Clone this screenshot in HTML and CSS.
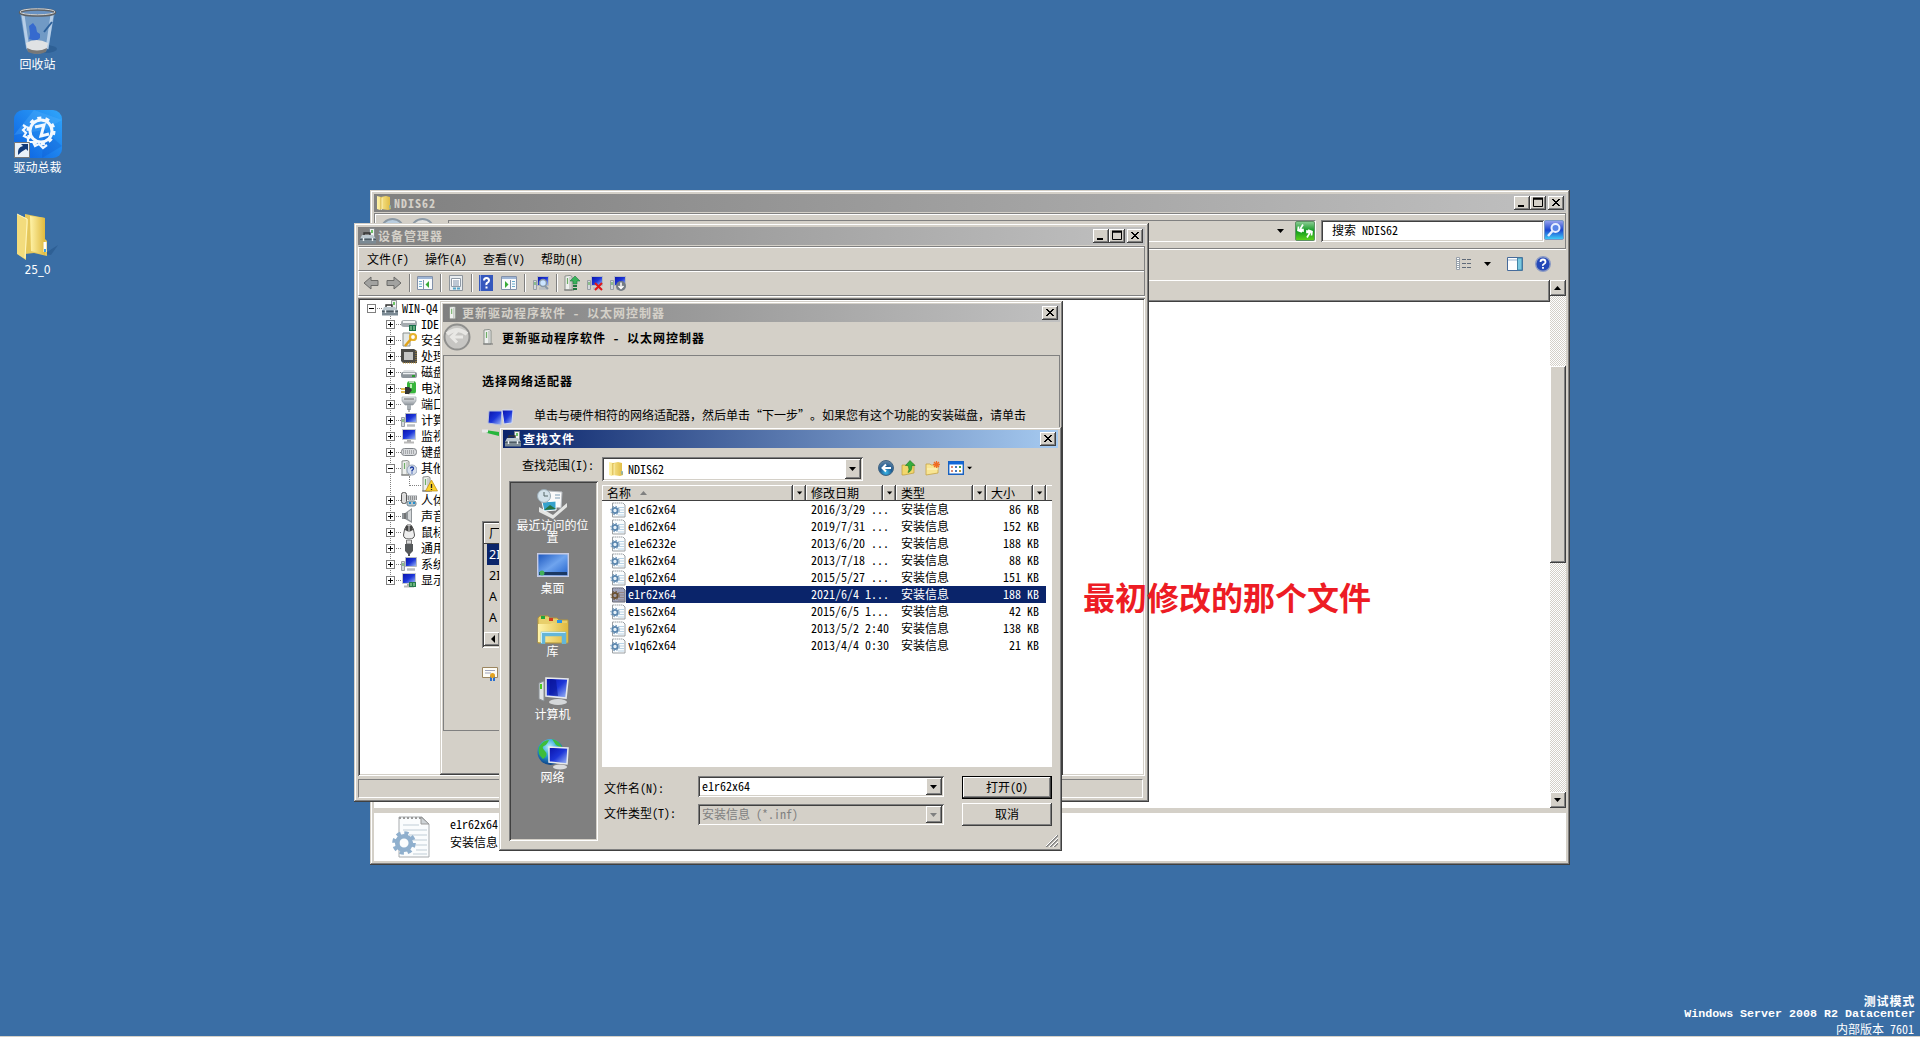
FILE: index.html
```html
<!DOCTYPE html>
<html lang="zh-CN">
<head>
<meta charset="utf-8">
<title>桌面</title>
<link rel="stylesheet" href="styles.css">
</head>
<body>
<svg class="defs" width="0" height="0" aria-hidden="true">
<defs>
<linearGradient id="gFold" x1="0" x2="1"><stop offset="0" stop-color="#fff3a8"/><stop offset="1" stop-color="#dfb93e"/></linearGradient>
<linearGradient id="gBlue" x1="0" y1="0" x2="1" y2="1"><stop offset="0" stop-color="#0a12a8"/><stop offset=".5" stop-color="#1c35d8"/><stop offset="1" stop-color="#a9c4f8"/></linearGradient>
<linearGradient id="gGrey" x1="0" x2="0" y1="0" y2="1"><stop offset="0" stop-color="#f4f6f8"/><stop offset="1" stop-color="#8d949b"/></linearGradient>
<linearGradient id="gDesk" x1="0" y1="0" x2="1" y2="1"><stop offset="0" stop-color="#1b55bd"/><stop offset=".5" stop-color="#6fa4ee"/><stop offset="1" stop-color="#1f5fcb"/></linearGradient>
<linearGradient id="gApp" x1="0" y1="1" x2="1" y2="0"><stop offset="0" stop-color="#0a5fe0"/><stop offset="1" stop-color="#30a6fb"/></linearGradient>
<linearGradient id="gGreen" x1="0" x2="0" y1="0" y2="1"><stop offset="0" stop-color="#8fce98"/><stop offset=".5" stop-color="#109a20"/><stop offset="1" stop-color="#5fd51c"/></linearGradient>
<linearGradient id="gSearch" x1="0" x2="0" y1="0" y2="1"><stop offset="0" stop-color="#9aa4ee"/><stop offset=".5" stop-color="#1b46cf"/><stop offset="1" stop-color="#41d2fa"/></linearGradient>
<radialGradient id="gGlobe" cx=".45" cy=".3" r=".7"><stop offset="0" stop-color="#b8f0fa"/><stop offset=".5" stop-color="#2aa0d8"/><stop offset="1" stop-color="#0b3f86"/></radialGradient>
<radialGradient id="gNav" cx=".5" cy=".8" r=".8"><stop offset="0" stop-color="#39b6e8"/><stop offset=".5" stop-color="#1e5b92"/><stop offset="1" stop-color="#6d8aa6"/></radialGradient>

<symbol id="folder" viewBox="0 0 16 16"><path d="M1 1l4 1 5-1 4 1v8l1 1v3l-3 1-7-1-1 1-3-1z" fill="url(#gFold)"/><path d="M5 2v12" stroke="#c49b2a" stroke-width=".8"/><path d="M6 3v11l-1 1" stroke="#fff6c0" fill="none" stroke-width=".8"/><path d="M14 10v3.500" stroke="#58a8e8"/></symbol>
<symbol id="toolbox" viewBox="0 0 16 16"><path d="M9.500.500h5v9h-5z" fill="#eef1f2" stroke="#7b8286" stroke-width=".8"/><path d="M12 2v3" stroke="#35b02a" stroke-width="1.400"/><path d="M4 7V5h6v2" fill="none" stroke="#333" stroke-width="1.400"/><path d="M2 7h11l2.500 3H.5z" fill="#bcc8cf"/><path d="M0 10h16v5.500H0z" fill="#7b8a94"/><path d="M0 11.500h16" stroke="#4d5a63"/><path d="M3.500 10v3M12.500 10v3" stroke="#eef3f6" stroke-width="1.400"/></symbol>
<symbol id="tower" viewBox="0 0 16 16"><path d="M4 1l5-.5 2 1V15H4z" fill="#eef0ee" stroke="#8a8f8a"/><path d="M9 2v12" stroke="#a9aea9"/><path d="M6.500 3v6" stroke="#6fae66" stroke-width="1.200"/><path d="M3 15h10" stroke="#777"/></symbol>
<symbol id="monitor" viewBox="0 0 16 16"><path d="M1.500 1.500h13v10h-13z" fill="url(#gBlue)" stroke="#c5c9cc"/><path d="M6 12h4v2H6z" fill="#aaa"/><path d="M3 14.500h10" stroke="#b8b8b8" stroke-width="2"/></symbol>
<symbol id="pc" viewBox="0 0 16 16"><path d="M.5 5.500h3v9h-3z" fill="#d4d8dc" stroke="#999fa5"/><path d="M2 7v3" stroke="#42a13c"/><path d="M4.500 1.500h11v9h-11z" fill="url(#gBlue)" stroke="#b5babf"/><path d="M6 13.500h8" stroke="#b8bcc0" stroke-width="2.500"/></symbol>
<symbol id="disk" viewBox="0 0 16 16"><path d="M1 9l2-3h10l2 3z" fill="#dfe2e4"/><rect x="0" y="8" width="16" height="6" rx="2" fill="#8d959b"/><path d="M2 9.500h12" stroke="#eef1f3" stroke-width="1.500"/><path d="M11 12h3" stroke="#2a9b30" stroke-width="2"/></symbol>
<symbol id="ide" viewBox="0 0 16 16"><rect x="0" y="4" width="16" height="7" rx="3" fill="#a4abb0"/><path d="M2 6h12" stroke="#f2f4f5" stroke-width="2"/><path d="M8 9h7v6H8z" fill="#17704a"/><path d="M10 10v4M13 10v4" stroke="#b8e7b2"/></symbol>
<symbol id="key" viewBox="0 0 16 16"><path d="M2 1h7v13H2z" fill="#e4e8e6" stroke="#8b918d"/><circle cx="12" cy="5" r="3" fill="none" stroke="#e6b22c" stroke-width="2.200"/><path d="M10 7l-6 7" stroke="#e0a31c" stroke-width="2.500"/></symbol>
<symbol id="chip" viewBox="0 0 16 16"><path d="M0 1h13l3 2v12H2l-2-2z" fill="#4b4b48"/><path d="M15 3v12M2 15h13" stroke="#c69b3c" stroke-dasharray="1 1"/><path d="M3 4h9v8H3z" fill="#c5c6c5"/></symbol>
<symbol id="battery" viewBox="0 0 16 16"><rect x="6" y="1" width="9" height="13" rx="3" fill="#37b53b"/><path d="M8 2h5M7 14h7" stroke="#ddd" stroke-width="1.500"/><path d="M10 4v4" stroke="#b8f0b0" stroke-width="2"/><path d="M0 9h4M0 12h4" stroke="#d7a51a" stroke-width="1.500"/><path d="M4 7h4l3 3-3 4H4z" fill="#343434"/></symbol>
<symbol id="port" viewBox="0 0 16 16"><path d="M1 1h14v4l-3 4H4L1 5z" fill="url(#gGrey)" stroke="#8d949b" stroke-width=".6"/><path d="M3 3h10" stroke="#666"/><path d="M6 9h4v5H6z" fill="#a9b0b5"/><path d="M8 13v3" stroke="#777"/></symbol>
<symbol id="kbd" viewBox="0 0 16 16"><rect x=".5" y="4.500" width="15" height="7" rx="3" fill="#d8dadd" stroke="#7e8287"/><path d="M2 7h12M2 9h12" stroke="#72767a" stroke-dasharray="1 1"/></symbol>
<symbol id="other" viewBox="0 0 16 16"><use href="#tower" x="-3"/><circle cx="11" cy="10" r="5" fill="#d9e1ee" stroke="#9aa8bc"/><path d="M9.500 8.500q0-1.500 1.500-1.500t1.500 1.500q0 1-1.500 2v1M11 12.500v1" fill="none" stroke="#17389d" stroke-width="1.300"/></symbol>
<symbol id="warn" viewBox="0 0 16 16"><use href="#tower" x="-3"/><path d="M9.500 4l6 11h-12z" fill="#fbd22c" stroke="#bb8a12" stroke-width=".7"/><path d="M9.500 8v4M9.500 13v1" stroke="#222" stroke-width="1.300"/></symbol>
<symbol id="hid" viewBox="0 0 16 16"><rect x=".5" y=".5" width="5" height="11" rx="2" fill="#ddd" stroke="#555"/><path d="M6 3h10v5H6z" fill="#c9cccf"/><path d="M7 5h9M7 7h9" stroke="#555" stroke-dasharray="1 1"/><rect x="6" y="9" width="9" height="5" rx="2" fill="#b8c5cc" stroke="#6f8592"/><path d="M8 11h2M12 11h2" stroke="#2390d0" stroke-width="2"/></symbol>
<symbol id="speaker" viewBox="0 0 16 16"><path d="M1 5h3l7-5v15l-7-4H1z" fill="#8f9498"/><path d="M7 4l3-2v11l-3-2z" fill="#d6d9db"/><path d="M4 5v6" stroke="#555"/></symbol>
<symbol id="mouse" viewBox="0 0 16 16"><path d="M6 1h4q3 3 3.500 10 0 4-5.500 4t-5.500-4Q3 4 6 1z" fill="#eee" stroke="#555"/><path d="M5 2h6l1 4-4 2-4-2z" fill="#454545"/><path d="M8 1v7" stroke="#ddd"/></symbol>
<symbol id="usb" viewBox="0 0 16 16"><path d="M5.500 0h5v4h-5z" fill="#dadada" stroke="#777"/><path d="M4 4h8v7l-3 3v2H7v-2l-3-3z" fill="#55585a"/></symbol>
<symbol id="display" viewBox="0 0 16 16"><use href="#monitor"/><path d="M8 10h7v5H8z" fill="#257a4b"/><path d="M10 11v3M13 11v3" stroke="#b8eab5"/></symbol>
<symbol id="gear" viewBox="-8 -8 16 16"><circle r="4.200" fill="none" stroke="currentColor" stroke-width="2.800"/><circle r="6.200" fill="none" stroke="currentColor" stroke-width="2.200" stroke-dasharray="2.600 2.270"/></symbol>
<symbol id="inf" viewBox="0 0 16 16"><path d="M2.500 1.500h10.500l2 2v12H2.500z" fill="#fbfdfe" stroke="#9a9fa3"/><path d="M4 1.500h9" stroke="#fff" stroke-dasharray="1 1"/><path d="M8 6h6M8 8.500h6M8 11h6M8 13.500h6" stroke="#b9d3e6"/><circle cx="5" cy="9" r="2.600" fill="#e7f1f8" stroke="#5985ad" stroke-width="1.800"/><circle cx="5" cy="9" r="4.200" fill="none" stroke="#5985ad" stroke-dasharray="1.500 1.800"/></symbol>
<symbol id="help" viewBox="0 0 16 16"><circle cx="8" cy="8" r="7.300" fill="#2448b8" stroke="#8d9cc4" stroke-width="1.400"/><path d="M5.500 6q0-2.500 2.500-2.500T10.500 6q0 1.200-1.500 2t-1 1.800M8 11v1.700" fill="none" stroke="#fff" stroke-width="1.800"/></symbol>
<symbol id="close" viewBox="0 0 16 14"><path d="M4 3l7 7M5 3l7 7M11 3l-7 7M12 3l-7 7" stroke="#000" stroke-width="1"/></symbol>
<symbol id="min" viewBox="0 0 16 14"><path d="M4 10h6" stroke="#000" stroke-width="2"/></symbol>
<symbol id="max" viewBox="0 0 16 14"><path d="M3.500 3h9v7.500h-9z" fill="none" stroke="#000"/><path d="M3 2.500h10" stroke="#000" stroke-width="2"/></symbol>
<symbol id="down" viewBox="0 0 8 4"><path d="M0 0h7L3.500 4z" fill="currentColor"/></symbol>
<symbol id="arrow" viewBox="0 0 16 14"><path d="M1 7l7-6v3.500h7v5H8V13z" fill="#a2a2a0" stroke="#6a6a68"/></symbol>
<symbol id="pane" viewBox="0 0 16 14"><path d="M.5.500h15v13H.5z" fill="#f8fafc" stroke="#8290a8"/><path d="M1 2h14" stroke="#9fb6d6" stroke-width="2"/><path d="M6.500 4v9" stroke="#8290a8"/><path d="M2 5.500h3M2 8h3M2 10.500h3" stroke="#69aacb"/><path d="M12 5v7L8.500 8.500z" fill="#37aa35"/></symbol>
<symbol id="bigpc" viewBox="0 0 32 28"><path d="M2 6l5-2v20l-5-2z" fill="#dfe2e4" stroke="#8b9196"/><path d="M4 7v5" stroke="#4ccb20" stroke-width="2"/><ellipse cx="21" cy="25" rx="9" ry="3" fill="#d5d8da"/><path d="M9 1l22 1-2 19-20-2z" fill="url(#gBlue)" stroke="#e8eaec" stroke-width="1.600"/><path d="M13 2l6 1 2 16-9-1z" fill="#06108d" opacity=".55"/></symbol>
</defs>
</svg>

<main class="desktop">
  <div class="icons">
    <div class="dicon">
      <svg width="48" height="48" viewBox="0 0 48 48"><ellipse cx="31" cy="42" rx="12" ry="4" fill="#1d4a7c" opacity=".4"/><path d="M6 5l6 36q12 7 22 0l7-36z" fill="#a7c6e6" opacity=".5"/><path d="M9 8l5 34M38 8l-5 34" stroke="#d4e5f6" stroke-width="3" opacity=".7"/><path d="M15 19l4-3 3 4 1 5 3 2v4l-4 3-7-2 1-5z" fill="#2c62cf" opacity=".85"/><path d="M30 25l8-10" stroke="#2d619b" stroke-width="2"/><path d="M12 36q10-6 22 0l-2 8q-9 5-18 0z" fill="#e0e2e4"/><path d="M13 41q10 5 20 0l-1 4q-9 4-18 0z" fill="#777"/><ellipse cx="23.500" cy="5.500" rx="17.500" ry="3" fill="#6992c2" stroke="#5d6165" stroke-width="2.500"/><ellipse cx="23.500" cy="4.800" rx="17.500" ry="3" fill="none" stroke="#d3d6d8"/></svg>
      <span>回收站</span>
    </div>
    <div class="dicon">
      <svg width="48" height="48" viewBox="0 0 48 48"><rect width="48" height="48" rx="9" fill="url(#gApp)"/><path d="M0 25l20-25 28 10-18 10z" fill="#62bcff" opacity=".25"/><path d="M30 20l18 16-20 12z" fill="#0a50c8" opacity=".25"/><g fill="none" stroke="#f3f9ff"><circle cx="27" cy="21" r="11" stroke-width="3"/><circle cx="27" cy="21" r="13" stroke-width="3" stroke-dasharray="4 4.170"/><path d="M9 15l3 2-3 3 3 3-2 3 4 2v4l5 0 2 4 4-2 4 4 4-3" stroke-width="2.200"/><path d="M21 17l9-2-3 11 8-2" stroke-width="3"/></g><path d="M.5 32.500h15v15H.5z" fill="#e9f1f8" stroke="#777"/><path d="M4 45q-1-8 5-9l-2-2 7 0v7l-2-2q-4 2-8 6z" fill="#123a78"/></svg>
      <span>驱动总裁</span>
    </div>
    <div class="dicon">
      <svg width="48" height="48" viewBox="0 0 48 48"><path d="M30 41l14-9-7 10z" fill="#1d4a7c" opacity=".4"/><path d="M11 1l20 4v21l2 2v15l-13-3-9 1z" fill="#e5c75b"/><path d="M16 3l15 2v37l-14-4z" fill="url(#gFold)"/><path d="M3 1l11 5q0 2 0 4l-2 28v9L3 41z" fill="#f3dc7d"/><path d="M3 1l10 5v4l-2 35" fill="none" stroke="#fff6bd"/><path d="M31 29v10" stroke="#fff" stroke-width="3"/><path d="M31 36v3" stroke="#39a2e8" stroke-width="2"/></svg>
      <span class="tahoma">25_0</span>
    </div>
  </div>

  <section class="win explorer">
    <header class="title"><svg width="16" height="16"><use href="#folder"/></svg><b>NDIS62</b><i class="cap"><svg><use href="#min"/></svg></i><i class="cap"><svg><use href="#max"/></svg></i><i class="cap gap"><svg><use href="#close"/></svg></i></header>
    <div class="addr">
      <div class="nav"><i></i><i></i></div>
      <div class="path"><svg class="pfold" width="16" height="16"><use href="#folder"/></svg><svg class="dn" width="8" height="4"><use href="#down"/></svg><svg width="20" height="20" viewBox="0 0 20 20"><rect x=".5" y=".5" width="19" height="19" rx="1.500" fill="url(#gGreen)" stroke="#5e9163"/><path d="M8 3.500L5 8.500h3v1.500L3.500 9M3.500 5.500L3 9.500 7 11M12 16.500l3-5h-3V10l4.500 1M16.500 14.500l.5-4-4-1.500" fill="none" stroke="#fff" stroke-width="1.700"/></svg></div>
      <div class="search">搜索 NDIS62</div>
      <svg class="sbtn" width="20" height="20" viewBox="0 0 20 20"><rect x=".5" y=".5" width="19" height="19" rx="1.500" fill="url(#gSearch)" stroke="#7797c5"/><circle cx="11.500" cy="8" r="4" fill="#5a85e8" stroke="#e8efff" stroke-width="2"/><path d="M8.500 11L4 16" stroke="#e8efff" stroke-width="2.500"/></svg>
    </div>
    <div class="cmdbar">
      <svg width="16" height="14" viewBox="0 0 16 14"><path d="M.5.500h3v12h-3zM.5 4.500h3M.5 8.500h3" fill="#fff" stroke="#98a0aa"/><path d="M1.500 2.500h1M1.500 6.500h1M1.500 10.500h1" stroke="#335566"/><path d="M6 2.500h10M6 6.500h10M6 10.500h10" stroke="#5f6a78" stroke-dasharray="4 1"/></svg>
      <svg class="dn" width="8" height="4"><use href="#down"/></svg>
      <svg width="16" height="14" viewBox="0 0 16 14"><path d="M.5.500h15v13H.5z" fill="#fcfdfe" stroke="#466a9a"/><path d="M1 3h9" stroke="#9bb3cf"/><path d="M10.500 1h4.500v12h-4.500z" fill="#79c8e0" stroke="#4283a5"/></svg>
      <svg width="16" height="16"><use href="#help"/></svg>
    </div>
    <div class="xbody">
      <div class="xmain"><div class="xhead"></div></div>
      <div class="sbar"><i class="btn up"><svg class="flip" width="8" height="4"><use href="#down"/></svg></i><i class="trk1"></i><i class="btn thumb"></i><i class="trk2"></i><i class="btn up"><svg width="8" height="4"><use href="#down"/></svg></i></div>
    </div>
    <div class="details">
      <svg width="40" height="44" viewBox="0 0 40 44"><path d="M8 2h23l7 7v33H8z" fill="#fafcfd" stroke="#a7abae"/><path d="M8 3h22" stroke="#999" stroke-width="2" stroke-dasharray="2 2"/><path d="M30 2v7h8z" fill="#cfd4d7" stroke="#999"/><path d="M12 10h16M12 15h24M18 20h18M22 25h14M25 30h11M25 35h11M22 39h14" stroke="#c0cdd6"/><svg x="0" y="14" width="26" height="28" class="steel"><use href="#gear"/></svg></svg>
      <div><p>e1r62x64</p><p>安装信息</p></div>
    </div>
  </section>

  <section class="win devmgr">
    <header class="title"><svg width="16" height="16"><use href="#toolbox"/></svg><b>设备管理器</b><i class="cap"><svg><use href="#min"/></svg></i><i class="cap"><svg><use href="#max"/></svg></i><i class="cap gap"><svg><use href="#close"/></svg></i></header>
    <nav class="menu"><span>文件(F)</span><span>操作(A)</span><span>查看(V)</span><span>帮助(H)</span></nav>
    <div class="tools">
      <svg width="16" height="14"><use href="#arrow"/></svg>
      <svg class="m7 flipx" width="16" height="14"><use href="#arrow"/></svg>
      <i></i><svg class="m6" width="16" height="14"><use href="#pane"/></svg>
      <i></i><svg class="m6" width="16" height="16" viewBox="0 0 16 16"><path d="M1.500.500h13v15h-13z" fill="#e9edf0" stroke="#8e959c"/><path d="M3.500 3.500h9v8h-9z" fill="#fff" stroke="#909aa5"/><path d="M5 6h6M5 8h6M5 10h6" stroke="#7a8fa8"/><path d="M5 13.500h3M9 13.500h3" stroke="#54a5c8" stroke-width="2"/></svg>
      <i></i><svg class="m6" width="14" height="16" viewBox="0 0 14 16"><path d="M0 0h14v16H0z" fill="#3558bd"/><path d="M1.500 0v16" stroke="#89a2e6"/><path d="M5 5.500q0-2.500 2.500-2.500T10 5.500q0 1.500-1.500 2.200T7.500 10M7.500 11.500v2" fill="none" stroke="#fff" stroke-width="2"/></svg>
      <svg class="m8 flipx" width="16" height="14"><use href="#pane"/></svg>
      <i></i><svg class="m7" width="16" height="16" viewBox="0 0 16 16"><use href="#pc"/><circle cx="10" cy="8" r="3.500" fill="#cbe4ff" stroke="#8897a5" stroke-width="1.500"/><path d="M12 11l3 3" stroke="#8897a5" stroke-width="2"/></svg>
      <i></i><svg class="m6" width="16" height="16" viewBox="0 0 16 16"><use href="#tower" x="-3"/><path d="M11 1l5 5h-3v3H9V6H6z" fill="#3ab35c" stroke="#207840" stroke-width=".6"/><path d="M9 11h4M9 14h4" stroke="#207840" stroke-width="2"/></svg>
      <svg class="m7" width="16" height="16" viewBox="0 0 16 16"><use href="#pc"/><path d="M8 8l7 7M15 8l-7 7" stroke="#e01818" stroke-width="2"/></svg>
      <svg class="m7" width="16" height="16" viewBox="0 0 16 16"><use href="#pc"/><circle cx="11" cy="11" r="5" fill="#747c84"/><path d="M11 7.500V13M8.500 11l2.500 2.500 2.500-2.500" stroke="#fff" stroke-width="1.500" fill="none"/></svg>
    </div>
    <div class="treebox">
      <ul class="tree">
        <li class="root"><i class="pm minus"></i><svg><use href="#toolbox"/></svg>WIN-Q4</li>
        <li><i class="pm"></i><svg><use href="#ide"/></svg>IDE</li>
        <li><i class="pm"></i><svg><use href="#key"/></svg>安全</li>
        <li><i class="pm"></i><svg><use href="#chip"/></svg>处理</li>
        <li><i class="pm"></i><svg><use href="#disk"/></svg>磁盘</li>
        <li><i class="pm"></i><svg><use href="#battery"/></svg>电池</li>
        <li><i class="pm"></i><svg><use href="#port"/></svg>端口</li>
        <li><i class="pm"></i><svg><use href="#pc"/></svg>计算</li>
        <li><i class="pm"></i><svg><use href="#monitor"/></svg>监视</li>
        <li><i class="pm"></i><svg><use href="#kbd"/></svg>键盘</li>
        <li><i class="pm minus"></i><svg><use href="#other"/></svg>其他</li>
        <li class="sub"><svg><use href="#warn"/></svg></li>
        <li><i class="pm"></i><svg><use href="#hid"/></svg>人体</li>
        <li><i class="pm"></i><svg><use href="#speaker"/></svg>声音</li>
        <li><i class="pm"></i><svg><use href="#mouse"/></svg>鼠标</li>
        <li><i class="pm"></i><svg><use href="#usb"/></svg>通用</li>
        <li><i class="pm"></i><svg><use href="#pc"/></svg>系统</li>
        <li class="last"><i class="pm"></i><svg><use href="#display"/></svg>显示</li>
      </ul>
    </div>
    <div class="status"></div>
  </section>

  <section class="win wizard">
    <header class="title"><svg width="14" height="14" viewBox="2 0 12 16"><use href="#tower" width="16" height="16"/></svg><b>更新驱动程序软件 - 以太网控制器</b><i class="cap"><svg><use href="#close"/></svg></i></header>
    <div class="whead">
      <svg width="28" height="28" viewBox="0 0 28 28"><circle cx="14" cy="14" r="12.500" fill="#c7c6c3" stroke="#8f8f8d" stroke-width="2"/><path d="M4 11q10-8 20 0" stroke="#e7e6e3" stroke-width="4" fill="none"/><path d="M20 14H9M14 8.500L8.500 14l5.500 5.500" fill="none" stroke="#e9e8e5" stroke-width="3"/></svg>
      <svg class="wt" width="16" height="16"><use href="#tower"/></svg>
      <b>更新驱动程序软件 - 以太网控制器</b>
    </div>
    <div class="wbody">
      <b>选择网络适配器</b>
      <div class="wmsg">
        <svg width="32" height="32" viewBox="0 0 32 32"><path d="M7 3h13l-1 14-13-2z" fill="url(#gBlue)" stroke="#b7c1dd"/><path d="M20 2h11l-1 13-8 1z" fill="url(#gBlue)" stroke="#d6dcf0"/><path d="M3 22l14 2v4l-12-3z" fill="#26b53c"/><path d="M0 23h6" stroke="#e8e8e8" stroke-width="3"/></svg>
        <span>单击与硬件相符的网络适配器，然后单击“下一步”。如果您有这个功能的安装磁盘，请单击</span>
      </div>
      <div class="wlist"><div class="wth">厂</div><p class="on">2I</p><p>2I</p><p>A</p><p>A</p><div class="hsb"><i class="btn"><svg width="5" height="8" viewBox="0 0 5 8"><path d="M5 0v8L1 4z"/></svg></i></div></div>
      <svg class="cert" width="16" height="14" viewBox="0 0 16 14"><path d="M.5.500h15v10H.5z" fill="#fdfcf6" stroke="#9c8660"/><path d="M3 3.500h10M3 6h6" stroke="#9ea3bb"/><path d="M9 9v5M12 9v5" stroke="#2c6fce" stroke-width="2"/><circle cx="10.500" cy="8.500" r="2.500" fill="#e3a321"/></svg>
    </div>
  </section>

  <section class="win finder">
    <header class="title active"><svg width="16" height="16"><use href="#toolbox"/></svg><b>查找文件</b><i class="cap"><svg><use href="#close"/></svg></i></header>
    <div class="look">
      <label>查找范围(I):</label>
      <div class="combo"><svg width="16" height="16"><use href="#folder"/></svg><span>NDIS62</span><i class="btn"><svg width="8" height="4"><use href="#down"/></svg></i></div>
      <svg class="i1" width="16" height="16" viewBox="0 0 16 16"><circle cx="8" cy="8" r="7.500" fill="url(#gNav)" stroke="#426582"/><path d="M13 8H5M8 4.500L4.500 8 8 11.500" fill="none" stroke="#fff" stroke-width="2"/></svg>
      <svg class="i2" width="16" height="16" viewBox="0 0 16 16"><path d="M1 5h5l1-1h6v9L3 15H1z" fill="#f1d66b" stroke="#bd9b3a" stroke-width=".7"/><path d="M9 .500l5 5h-3q0 6-4 7 2-3 0-7H4.500z" fill="#35ad3c" stroke="#197524" stroke-width=".6"/></svg>
      <svg class="i3" width="16" height="16" viewBox="0 0 16 16"><path d="M1 4h4l1 1h7v8L1 15z" fill="#f8e593" stroke="#c7a343" stroke-width=".8"/><path d="M2 9h11" stroke="#fff7c5"/><path d="M11.500 1v7M8 4.500h7M9 2l5 5M14 2L9 7" stroke="#f06b22" stroke-width="1.300"/></svg>
      <svg class="i4" width="16" height="14" viewBox="0 0 16 14"><path d="M.7.700h14.600v12.600H.7z" fill="#fff" stroke="#1861c0" stroke-width="1.400"/><path d="M1 2h14" stroke="#1268d8" stroke-width="3"/><path d="M3 6h2M3 10h2" stroke="#d88b76" stroke-width="2"/><path d="M7 6h2M7 10h2" stroke="#477abf" stroke-width="2"/><path d="M11 6h2" stroke="#45a045" stroke-width="2"/><path d="M11 10h2" stroke="#b99b36" stroke-width="2"/></svg>
      <svg class="i5" width="6" height="4" viewBox="0 0 8 4"><use href="#down"/></svg>
    </div>
    <div class="fmain">
      <aside class="places">
        <div class="p1"><svg width="32" height="31" viewBox="0 0 32 31"><path d="M2 19l14 8 14-12v4L16 31 2 24z" fill="#e4e5e3"/><path d="M11 3l14 1-1 16-14-2z" fill="#fafafa" stroke="#b8bcc0"/><path d="M18 7h5M18 10h5" stroke="#7d9db5"/><path d="M5 14l14-1v9l-12 1z" fill="#36a2cc" stroke="#fff"/><path d="M7 22l6-5 6 4z" fill="#277441"/><circle cx="7" cy="8" r="6.500" fill="#d3e2ea" stroke="#9aabb5"/><path d="M7 4v4h4" fill="none" stroke="#556666"/></svg><span>最近访问的位<br>置</span></div>
        <div class="p2"><svg width="32" height="24" viewBox="0 0 32 24"><path d="M.7.700h30.600v22.600H.7z" fill="url(#gDesk)" stroke="#c6cbe3" stroke-width="1.400"/><path d="M2 20.500h28" stroke="#1a3763" stroke-width="3"/><circle cx="5" cy="20" r="2.500" fill="#42b05a"/></svg><span>桌面</span></div>
        <div class="p3"><svg width="32" height="30" viewBox="0 0 32 30"><path d="M1 3l2-2h8l2 2h7l2 2h9v23H1z" fill="#e8cf6b" stroke="#b5963a"/><path d="M4 2.500h4" stroke="#20a63a" stroke-width="3"/><path d="M12 4.500h4" stroke="#d23a1e" stroke-width="3"/><path d="M20 6.500h5" stroke="#2995e8" stroke-width="3"/><path d="M1 9h12l2-1h16v19H1z" fill="url(#gFold)"/><path d="M6 29V19h21v10" fill="none" stroke="#64b6d8" stroke-width="4.500"/><path d="M4.500 28V17.500h24" fill="none" stroke="#c9eef9"/></svg><span>库</span></div>
        <div class="p4"><svg width="32" height="28"><use href="#bigpc"/></svg><span>计算机</span></div>
        <div class="p5"><svg width="32" height="32" viewBox="0 0 32 32"><circle cx="13.500" cy="14" r="13" fill="url(#gGlobe)"/><path d="M2 9q4-7 10-7-2 5-5 6t1 5-2 8q-6-5-4-12zM15 1q8 2 10 9l-6-3z" fill="#3ebd3a"/><ellipse cx="23" cy="29" rx="7" ry="2.500" fill="#dadcde"/><path d="M12 9l19 1-1 16-18-2z" fill="url(#gBlue)" stroke="#e8eaec" stroke-width="1.500"/></svg><span>网络</span></div>
      </aside>
      <div class="right">
        <div class="list">
          <div class="th"><span>名称<svg class="sort" width="8" height="4"><use href="#down"/></svg></span><i><svg><use href="#down"/></svg></i><span>修改日期</span><i><svg><use href="#down"/></svg></i><span>类型</span><i><svg><use href="#down"/></svg></i><span>大小</span><i><svg><use href="#down"/></svg></i><span></span></div>
          <div class="tr"><svg><use href="#inf"/></svg><span>e1c62x64</span><span>2016/3/29 ...</span><span>安装信息</span><span>86 KB</span></div>
          <div class="tr"><svg><use href="#inf"/></svg><span>e1d62x64</span><span>2019/7/31 ...</span><span>安装信息</span><span>152 KB</span></div>
          <div class="tr"><svg><use href="#inf"/></svg><span>e1e6232e</span><span>2013/6/20 ...</span><span>安装信息</span><span>188 KB</span></div>
          <div class="tr"><svg><use href="#inf"/></svg><span>e1k62x64</span><span>2013/7/18 ...</span><span>安装信息</span><span>88 KB</span></div>
          <div class="tr"><svg><use href="#inf"/></svg><span>e1q62x64</span><span>2015/5/27 ...</span><span>安装信息</span><span>151 KB</span></div>
          <div class="tr sel"><svg><use href="#inf"/></svg><span>e1r62x64</span><span>2021/6/4 1...</span><span>安装信息</span><span>188 KB</span></div>
          <div class="tr"><svg><use href="#inf"/></svg><span>e1s62x64</span><span>2015/6/5 1...</span><span>安装信息</span><span>42 KB</span></div>
          <div class="tr"><svg><use href="#inf"/></svg><span>e1y62x64</span><span>2013/5/2 2:40</span><span>安装信息</span><span>138 KB</span></div>
          <div class="tr"><svg><use href="#inf"/></svg><span>v1q62x64</span><span>2013/4/4 0:30</span><span>安装信息</span><span>21 KB</span></div>
        </div>
        <div class="form">
          <label>文件名(N):</label><div class="field"><span>e1r62x64</span><i class="btn"><svg width="8" height="4"><use href="#down"/></svg></i></div><div class="push def">打开(O)</div>
          <label>文件类型(T):</label><div class="field off"><span>安装信息 (*.inf)</span><i class="btn"><svg width="8" height="4"><use href="#down"/></svg></i></div><div class="push">取消</div>
        </div>
      </div>
    </div>
    <svg class="grip" width="12" height="12" viewBox="0 0 12 12"><path d="M0 12L12 0M4 12l8-8M8 12l4-4" stroke="#808080" stroke-width="1.700"/><path d="M-1 12L12-1M3 12l9-9M7 12l5-5" stroke="#fff"/></svg>
  </section>

  <div class="note">最初修改的那个文件</div>
  <footer class="mark"><b>测试模式</b><b class="en">Windows Server 2008 R2 Datacenter</b><span>内部版本 7601</span></footer>
</main>
</body>
</html>
```
FILE: styles.css
```css
* { box-sizing: border-box; }
body {
  margin: 0; width: 1924px; height: 1038px; overflow: hidden; background: #fff;
  font: 12px/16px "Noto Sans CJK SC", sans-serif; color: #000;
  font-feature-settings: "hwid" 1;
}
p, ul { margin: 0; padding: 0; }
svg { display: block; flex: none; }
i { font-style: normal; flex: none; display: block; }
.defs { position: absolute; }
b { letter-spacing: 1px; }

.desktop { position: relative; width: 1920px; height: 1036px; background: #3a6ea5; box-shadow: 0 1px #d4d0c8; overflow: hidden; }
.icons { display: flex; flex-direction: column; width: 75px; padding-top: 7px; }
.dicon { height: 103px; display: flex; flex-direction: column; align-items: center; color: #fff; }
.dicon span { margin-top: 1px; }
.dicon .tahoma { font: 12px/16px "DejaVu Sans Condensed", sans-serif; }

/* window frames */
.win {
  position: absolute; display: flex; flex-direction: column; background: #d4d0c8; padding: 4px;
  box-shadow: inset -1px -1px #404040, inset 1px 1px #d4d0c8, inset -2px -2px #808080, inset 2px 2px #fff;
}
.title { height: 18px; flex: none; display: flex; align-items: center; padding: 0 2px; background: linear-gradient(90deg, #808080, #c0c0c0); color: #d4d0c8; }
.title.active { background: linear-gradient(90deg, #0a246a, #a6caf0); color: #fff; }
.title b { flex: 1; margin-left: 2px; padding-bottom: 1px; white-space: nowrap; }
.cap, .btn {
  display: flex; align-items: center; justify-content: center; width: 16px; height: 14px; background: #d4d0c8;
  box-shadow: inset -1px -1px #404040, inset 1px 1px #fff, inset -2px -2px #808080;
}
.cap svg { width: 16px; height: 14px; }
.cap.gap { margin-left: 2px; }

/* folder window */
.explorer { left: 370px; top: 190px; width: 1200px; height: 675px; }
.addr { display: flex; height: 36px; margin: 1px 0 0; padding: 6px 1px 0 5px; border: 1px solid #808080; box-shadow: inset 1px 1px #fff, 0 1px #fff; }
.nav { display: flex; gap: 5px; width: 68px; }
.nav i { width: 25px; height: 25px; border-radius: 50%; background: #b9cddf; border: 2px solid #8b98a4; margin-top: -2px; }
.nav i + i { background: #e2e2e0; }
.path { width: 868px; height: 22px; display: flex; align-items: center; border: 1px solid #808080; border-right-color: #fff; border-bottom-color: #fff; }
.path .dn { margin-left: auto; margin-right: 10px; }
.pfold { margin-left: 2px; }
.search { width: 223px; height: 22px; margin-left: 5px; padding: 2px 11px; line-height: 16px; background: #fff; box-shadow: inset 1px 1px #808080, inset -1px -1px #fff, inset 2px 2px #404040, inset -2px -2px #d4d0c8; }
.sbtn { margin: 0; }
.cmdbar { height: 31px; flex: none; display: flex; align-items: center; justify-content: flex-end; padding: 0 15px 1px 0; }
.cmdbar svg:nth-child(2) { margin: 0 15px 0 12px; }
.cmdbar svg:nth-child(4) { margin-left: 12px; }
.xbody { flex: 1; display: flex; }
.xmain { flex: 1; background: #fff; }
.xhead { height: 22px; background: #d4d0c8; box-shadow: inset -1px -1px #404040, inset 0 1px #fff, inset -2px -2px #808080; }
.sbar { width: 16px; display: flex; flex-direction: column; }
.sbar .up { height: 16px; }
.sbar .thumb { height: 197px; }
.trk1, .trk2 { background: repeating-conic-gradient(#fff 0 25%, #d4d0c8 0 50%) 0 0 / 2px 2px; }
.trk1 { height: 70px; }
.trk2 { flex: 1; }
.flip { transform: scaleY(-1); }
.flipx { transform: scaleX(-1); }
.details { flex: none; height: 48px; margin-top: 5px; background: #fff; display: flex; padding: 2px 0 0 17px; }
.details div { margin-left: 19px; padding-top: 1px; }
.details p { height: 18px; }
.steel { color: #8fafcd; }

/* device manager */
.devmgr { left: 354px; top: 223px; width: 795px; height: 579px; }
.menu { flex: none; display: flex; gap: 16px; height: 25px; margin-top: 1px; padding: 4px 0 0 8px; border: 1px solid #808080; border-left-color: #fff; box-shadow: inset 0 1px #fff; }
.tools { flex: none; height: 25px; display: flex; align-items: center; padding-left: 4px; border: 1px solid #808080; border-width: 0 1px 1px 1px; border-left-color: #fff; box-shadow: inset 0 1px #fff, 0 1px #fff; }
.tools i { width: 2px; height: 18px; margin-left: 7px; border-left: 1px solid #808080; border-right: 1px solid #fff; }
.m6 { margin-left: 6px; } .m7 { margin-left: 7px; } .m8 { margin-left: 8px; }
.treebox { flex: 1; margin-top: 2px; background: #fff; overflow: hidden; box-shadow: inset 1px 1px #808080, inset -1px -1px #fff, inset 2px 2px #404040, inset -2px -2px #d4d0c8; }
.tree { list-style: none; padding: 2px 0 0 28px; }
.tree li { position: relative; display: flex; align-items: center; height: 16px; white-space: nowrap; }
.tree svg { width: 16px; height: 16px; margin-right: 4px; }
.tree .pm { width: 9px; height: 9px; margin-right: 6px; border: 1px solid #808080; position: relative; background: linear-gradient(#000, #000) 1px 3px / 5px 1px no-repeat, linear-gradient(#000, #000) 3px 1px / 1px 5px no-repeat, #fff; z-index: 1; }
.tree .pm.minus { background: linear-gradient(#000, #000) 1px 3px / 5px 1px no-repeat, #fff; }
.tree li::before { content: ""; position: absolute; left: 4px; top: 0; width: 11px; height: 16px; background: repeating-linear-gradient(#808080 0 1px, transparent 1px 2px) 0 0 / 1px 16px no-repeat, repeating-linear-gradient(90deg, #808080 0 1px, transparent 1px 2px) 0 8px / 11px 1px no-repeat; }
.tree .root { margin-left: -19px; }
.tree .root::before { height: 9px; background-position: 0 -20px, 0 8px; }
.tree .sub { padding-left: 36px; }
.tree .sub::before { background-size: 1px 16px, 0 0; }
.tree .sub::after { content: ""; position: absolute; left: 23px; top: 0; width: 11px; height: 9px; border-left: 1px dotted #808080; border-bottom: 1px dotted #808080; }
.tree .last::before { height: 9px; }
.status { flex: none; height: 19px; margin: 3px 2px 0 0; border: 1px solid #808080; border-right-color: #fff; border-bottom-color: #fff; }

/* driver wizard */
.wizard { left: 440px; top: 301px; width: 623px; height: 474px; padding: 3px; }
.wizard .title b { margin-left: 2px; }
.wizard .title { padding-left: 3px; }
.whead { height: 33px; flex: none; display: flex; align-items: center; padding-bottom: 3px; }
.whead .wt { margin: 0 6px 0 9px; }
.whead b { margin-left: 0; padding-top: 1px; }
.wbody { height: 376px; border: 1px solid #808080; padding: 17px 0 0 38px; }
.wmsg { display: flex; height: 132px; padding-top: 18px; }
.wmsg svg { margin-top: 1px; }
.wmsg span { margin-left: 20px; white-space: nowrap; font-feature-settings: "halt" 0, "chws" 0, "kern" 0; font-kerning: none; text-spacing-trim: space-all; }
.wlist { width: 540px; height: 127px; padding: 2px; background: #d4d0c8; box-shadow: inset 1px 1px #808080, inset -1px -1px #fff, inset 2px 2px #404040; }
.wth { height: 21px; padding: 2px 5px; box-shadow: inset -1px -1px #404040, inset 1px 1px #fff; }
.wlist p { height: 21px; line-height: 21px; margin-left: 3px; padding-left: 2px; font-family: "Noto Sans", sans-serif; font-size: 12.500px; white-space: nowrap; }
.wlist .on { background: #0a246a; color: #fff; }
.hsb { margin-top: 4px; }
.cert { margin-top: 19px; }

/* file dialog */
.finder { left: 499px; top: 427px; width: 563px; height: 424px; padding: 3px 4px; }
.look { height: 37px; display: flex; align-items: flex-start; padding: 9px 0 0 19px; flex: none; }
.look label { width: 80px; }
.combo { display: flex; align-items: center; width: 261px; height: 24px; padding: 2px 3px 2px 6px; background: #fff; box-shadow: inset 1px 1px #808080, inset -1px -1px #fff, inset 2px 2px #404040, inset -2px -2px #d4d0c8; }
.combo span { flex: 1; margin-left: 4px; }
.combo .btn { height: 20px; margin-right: -1px; }
.i1 { margin: 3px 0 0 15px; } .i2 { margin: 3px 0 0 7px; } .i3 { margin: 3px 0 0 8px; } .i4 { margin: 4px 0 0 7px; } .i5 { margin: 9px 0 0 3px; }
.fmain { display: flex; }
.places { width: 89px; height: 360px; margin: -4px 0 0 6px; padding-top: 7px; background: #808080; box-shadow: inset 1px 1px #808080, inset -1px -1px #fff, inset 2px 2px #404040, inset -2px -2px #d4d0c8; color: #fff; text-align: center; }
.places div { display: flex; flex-direction: column; align-items: center; height: 63px; padding-right: 2px; }
.places span { line-height: 12px; }
.p2 svg { margin: 2px 0 5px; } .p3 svg { margin: 1px 0 0; } .p4 svg { margin: 0 0 3px; } .p5 svg { margin: -2px 0 1px; }
.right { margin-left: 4px; width: 450px; }
.list { height: 282px; background: #fff; }
.th { display: flex; height: 16px; background: #d4d0c8; }
.th span { flex: none; width: 77px; padding-left: 5px; height: 16px; line-height: 16px; box-shadow: inset -1px -1px #404040, inset 1px 1px #fff, inset -2px 0 #808080; display: flex; align-items: center; }
.th span:nth-child(1) { width: 191px; }
.th span:nth-child(5) { width: 77px; }
.th span:nth-child(7) { width: 47px; }
.th span:nth-child(9) { width: 6px; padding: 0; box-shadow: inset 0 -1px #404040, inset 1px 1px #fff; }
.th i { width: 13px; height: 16px; display: flex; align-items: center; justify-content: center; box-shadow: inset -1px -1px #404040, inset 1px 1px #fff, inset -2px 0 #808080; }
.th i svg { width: 6px; height: 4px; }
.th .sort { color: #808080; transform: scaleY(-1); margin-left: 9px; }
.tr { display: grid; grid-template-columns: 16px 185px 90px 91px 47px; height: 17px; line-height: 16px; width: 444px; padding-left: 8px; white-space: pre; }
.tr svg { width: 16px; height: 17px; }
.tr span { padding-left: 2px; height: 17px; }
.tr span:nth-child(3), .tr span:nth-child(4) { padding-left: 0; }
.tr span:nth-child(5) { padding: 0; text-align: right; }
.sel { background: linear-gradient(90deg, #fff 24px, #0a246a 24px); color: #fff; }
.sel use { filter: brightness(.62) sepia(.25) hue-rotate(190deg) saturate(2); }
.form { display: grid; grid-template-columns: 96px 246px 18px 90px; grid-template-rows: 23px 23px; row-gap: 4px; margin-top: 9px; }
.form label { padding: 4px 0 0 2px; }
.form .push { grid-column: 4; display: flex; align-items: center; justify-content: center; padding-bottom: 1px; box-shadow: inset -1px -1px #404040, inset 1px 1px #fff, inset -2px -2px #808080; }
.form .def { border: 1px solid #000; }
.form label:nth-of-type(2) { padding-top: 2px; }
.field { height: 21px; display: flex; align-items: center; background: #fff; padding: 2px; box-shadow: inset 1px 1px #808080, inset -1px -1px #fff, inset 2px 2px #404040, inset -2px -2px #d4d0c8; }
.field span { flex: 1; padding: 0 0 1px 2px; white-space: pre; }
.field .btn { height: 17px; }
.off { background: #d4d0c8; color: #808080; margin-top: 1px; }
.grip { position: absolute; right: 4px; bottom: 4px; }

.note { position: absolute; left: 1083px; top: 574px; font-size: 32px; line-height: 44px; font-weight: 700; color: #ed1c24; white-space: nowrap; }
.mark { position: absolute; right: 5px; bottom: 0; display: flex; flex-direction: column; align-items: flex-end; color: #fff; }
.mark span { line-height: 15px; padding-right: 1px; }
.mark b { letter-spacing: .8px; line-height: 14px; }
.mark .en { font: 700 11.660px/13px "Liberation Mono", monospace; letter-spacing: 0; }
```
